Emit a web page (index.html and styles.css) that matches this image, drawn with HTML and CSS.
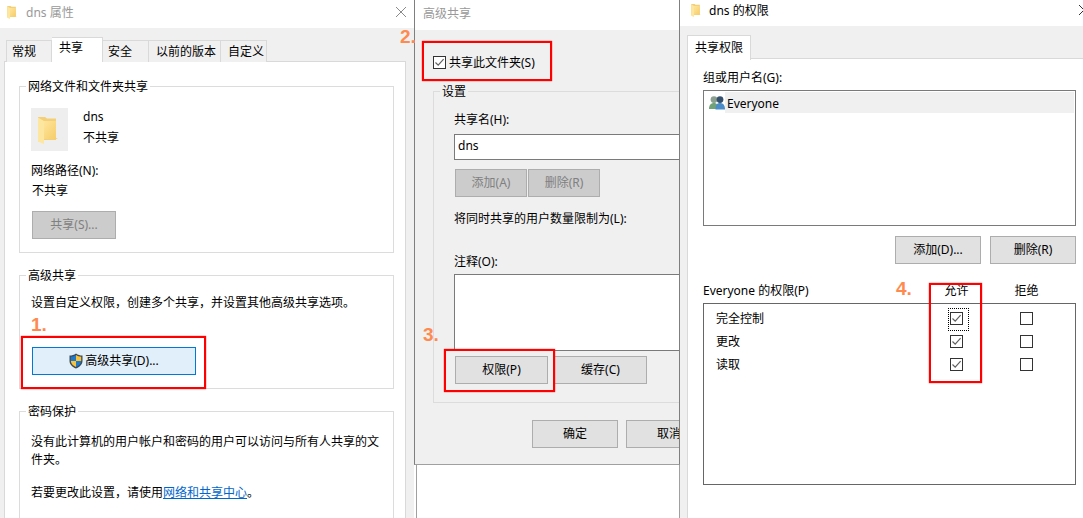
FILE: index.html
```html
<!DOCTYPE html>
<html lang="zh">
<head>
<meta charset="utf-8">
<title>dns 共享权限</title>
<link rel="stylesheet" href="styles.css">
</head>
<body>
<svg class="defs" width="0" height="0">
  <defs>
    <linearGradient id="fold" x1="0" y1="0" x2="1" y2="1">
      <stop offset="0" stop-color="#ffe59b"/>
      <stop offset="1" stop-color="#f5cb66"/>
    </linearGradient>
    <symbol id="folder" viewBox="0 0 20 27">
      <path d="M0 0h7l2 1.5h9V23H0z" fill="#f3cf77"/>
      <path d="M6 4 H18 V21 L20 22 H6z" fill="url(#fold)"/>
      <path d="M0 0.5 L6 4 V27 L1 25 H0z" fill="#fde6a0"/>
    </symbol>
    <symbol id="check" viewBox="0 0 13 13">
      <path d="M2.5 6.5 L5.2 9.2 L10.6 3.2" fill="none" stroke="#606060" stroke-width="1.2"/>
    </symbol>
  </defs>
</svg>

<section class="win win-back">
  <header class="title title-back">
    <svg class="fold-small"><use href="#folder"/></svg>
    <span class="title-text muted">dns 属性</span>
    <svg class="close" viewBox="0 0 10 10"><path d="M0 0 L10 10 M10 0 L0 10" stroke="#8a8a8a" fill="none"/></svg>
  </header>
  <nav class="tabs">
    <span class="tab tab-general">常规</span>
    <span class="tab tab-share active">共享</span>
    <span class="tab tab-security">安全</span>
    <span class="tab tab-prev">以前的版本</span>
    <span class="tab tab-custom">自定义</span>
  </nav>
  <div class="panel">
    <div class="group group-net">
      <div class="legend">网络文件和文件夹共享</div>
      <div class="info">
        <div class="folder-box"><svg class="fold-big"><use href="#folder"/></svg></div>
        <div class="info-text">
          <div>dns</div>
          <div class="info-state">不共享</div>
        </div>
      </div>
      <div class="path-label">网络路径(N):</div>
      <div class="path-value">不共享</div>
      <button class="btn btn-off btn-share">共享(S)...</button>
    </div>
    <div class="group group-adv">
      <div class="legend">高级共享</div>
      <p class="adv-text">设置自定义权限，创建多个共享，并设置其他高级共享选项。</p>
      <button class="btn btn-focus">
        <svg class="shield" viewBox="0 0 14 16">
          <path d="M7 0.5 C5 2 3 2.5 0.5 2.5 V8 C0.5 11.5 3.5 14 7 15.5 C10.5 14 13.5 11.5 13.5 8 V2.5 C11 2.5 9 2 7 0.5z" fill="#3c4a56"/>
          <path d="M7 2 V8 H1.8 V3.7 C3.8 3.6 5.4 3.1 7 2z" fill="#1f79c9"/>
          <path d="M7 2 C8.6 3.1 10.2 3.6 12.2 3.7 V8 H7z" fill="#f7c23c"/>
          <path d="M1.8 8 H7 V14 C4.4 12.8 2 11 1.8 8z" fill="#f7c23c"/>
          <path d="M7 8 H12.2 C12 11 9.6 12.8 7 14z" fill="#1f79c9"/>
        </svg>
        <span>高级共享(D)...</span>
      </button>
    </div>
    <div class="group group-pass">
      <div class="legend">密码保护</div>
      <p class="pass-text">没有此计算机的用户帐户和密码的用户可以访问与所有人共享的文件夹。</p>
      <p class="pass-link">若要更改此设置，请使用<a class="link">网络和共享中心</a>。</p>
    </div>
  </div>
</section>

<div class="under"></div>

<section class="win win-adv">
  <header class="title title-adv">
    <span class="title-text muted">高级共享</span>
  </header>
  <div class="check-row">
    <span class="cb on"><svg><use href="#check"/></svg></span>
    <span class="check-label">共享此文件夹(S)</span>
  </div>
  <div class="group group-set">
    <div class="legend">设置</div>
    <div class="set-name">共享名(H):</div>
    <div class="field">dns</div>
    <div class="row-off">
      <button class="btn btn-off btn-s">添加(A)</button>
      <button class="btn btn-off btn-s">删除(R)</button>
    </div>
    <div class="set-limit">将同时共享的用户数量限制为(L):</div>
    <div class="set-note">注释(O):</div>
    <div class="area"></div>
    <div class="row-perm">
      <button class="btn btn-m">权限(P)</button>
      <button class="btn btn-m">缓存(C)</button>
    </div>
  </div>
  <div class="row-ok">
    <button class="btn btn-l">确定</button>
    <button class="btn btn-l">取消</button>
  </div>
</section>

<section class="win win-perm">
  <header class="title title-perm">
    <svg class="fold-small"><use href="#folder"/></svg>
    <span class="title-text">dns 的权限</span>
    <svg class="close close-cut" viewBox="0 0 10 10"><path d="M0 0 L10 10 M10 0 L0 10" stroke="#333" fill="none"/></svg>
  </header>
  <nav class="tabs tabs-perm">
    <span class="tab active tab-only">共享权限</span>
  </nav>
  <div class="panel panel-perm">
    <div class="users-label">组或用户名(G):</div>
    <div class="list">
      <div class="list-row">
        <svg class="users" viewBox="0 0 16 14">
          <circle cx="5" cy="3.6" r="3.4" fill="#8b9f90"/>
          <path d="M0 13 C0 9 2 7 5 7 C8 7 9 9 9 13z" fill="#6fa276"/>
          <circle cx="11" cy="3.6" r="3.4" fill="#34506c"/>
          <path d="M6.5 13.5 C6.5 9 8 7 11 7 C14 7 16 9 16 13.5z" fill="#4a8cc8"/>
        </svg>
        <span class="list-name">Everyone</span>
      </div>
    </div>
    <div class="row-users">
      <button class="btn btn-l">添加(D)...</button>
      <button class="btn btn-l">删除(R)</button>
    </div>
    <div class="perm-grid perm-head">
      <span>Everyone 的权限(P)</span>
      <span class="center">允许</span>
      <span class="center">拒绝</span>
    </div>
    <div class="perm-box">
      <div class="perm-grid perm-row">
        <span class="perm-name">完全控制</span>
        <span class="center"><span class="cb on focus"><svg><use href="#check"/></svg></span></span>
        <span class="center"><span class="cb"></span></span>
      </div>
      <div class="perm-grid perm-row">
        <span class="perm-name">更改</span>
        <span class="center"><span class="cb on"><svg><use href="#check"/></svg></span></span>
        <span class="center"><span class="cb"></span></span>
      </div>
      <div class="perm-grid perm-row">
        <span class="perm-name">读取</span>
        <span class="center"><span class="cb on"><svg><use href="#check"/></svg></span></span>
        <span class="center"><span class="cb"></span></span>
      </div>
    </div>
  </div>
</section>

<span class="step step-1">1.</span>
<span class="step step-2">2.</span>
<span class="step step-3">3.</span>
<span class="step step-4">4.</span>
<div class="mark mark-1"></div>
<div class="mark mark-2"></div>
<div class="mark mark-3"></div>
<div class="mark mark-4"></div>
</body>
</html>
```

FILE: styles.css
```css
* { box-sizing: border-box; }
html, body { margin: 0; padding: 0; }
body {
  position: relative;
  width: 1083px;
  height: 518px;
  overflow: hidden;
  background: #fff;
  font: 12px/16px "Noto Sans", "Noto Sans CJK SC", sans-serif;
  color: #000;
}
p { margin: 0; }
.defs { position: absolute; }

/* windows on the desktop */
.win {
  position: absolute;
  top: 0;
  overflow: hidden;
  background: #f0f0f0;
}
.win-back { left: 0; width: 414px; height: 518px; }
.win-adv {
  left: 414px;
  width: 266px;
  height: 465px;
  border: 1px solid #7f7f7f;
  border-top: 0;
  border-bottom-color: #a0a0a0;
}
.win-perm { left: 680px; width: 403px; height: 518px; }
.under {
  position: absolute;
  left: 416px;
  top: 464px;
  width: 264px;
  height: 54px;
  background: #fff;
  border-left: 1px solid #a0a0a0;
  border-right: 1px solid #a0a0a0;
}

/* title bars */
.title { display: flex; align-items: flex-start; background: #fff; }
.title-back { height: 28px; padding: 5px 8px 0 7px; }
.title-adv { height: 30px; padding: 6px 0 0 8px; }
.title-perm { height: 26px; padding: 3px 0 0 11px; }
.title-text { white-space: nowrap; }
.muted { color: #999; }
.fold-small { width: 10px; height: 13px; margin: 1px 9px 0 0; flex: none; }
.title-perm .fold-small { margin: 1px 8px 0 0; }
.close { width: 10px; height: 10px; margin: 2px 0 0 auto; flex: none; }
.close-cut { margin: 2px -6px 0 auto; }

/* tabs */
.tabs {
  display: flex;
  align-items: flex-end;
  height: 25px;
  margin-top: 9px;
  padding-left: 6px;
  position: relative;
  z-index: 1;
  margin-bottom: -1px;
}
.tab {
  height: 22px;
  border: 1px solid #d9d9d9;
  border-bottom: 0;
  border-left: 0;
  padding: 3px 0 0 5px;
  background: #f0f0f0;
  white-space: nowrap;
}
.tab.active {
  height: 25px;
  background: #fff;
  border-left: 0;
  padding: 2px 0 0 7px;
}
.tab-general { width: 46px; border-left: 1px solid #d9d9d9; }
.tab-share { width: 51px; }
.tab-security { width: 46px; }
.tab-prev { width: 72px; padding-left: 7px; }
.tab-custom { width: 46px; padding-left: 7px; }
.tabs-perm { padding-left: 7px; margin-bottom: -2px; }
.tab.tab-only { width: 64px; border-left: 1px solid #d9d9d9; padding-left: 7px; padding-top: 4px; }

/* panels */
.panel {
  width: 402px;
  height: 470px;
  margin-left: 4px;
  padding-left: 14px;
  background: #fff;
  border: 1px solid #d9d9d9;
}
.panel-perm {
  width: 396px;
  height: 460px;
  margin-left: 7px;
  padding-left: 15px;
  border-right: 0;
  border-bottom: 0;
}

/* group boxes */
.group {
  width: 375px;
  border: 1px solid #dcdcdc;
  background: #fff;
}
.legend {
  width: fit-content;
  margin: -9px 0 -1px 6px;
  padding: 1px 2px 0;
  background: #fff;
  white-space: nowrap;
}
.group-net { height: 167px; margin-top: 24px; }
.group-adv { height: 114px; margin-top: 22px; }
.group-pass { height: 140px; margin-top: 22px; }
.group-set {
  width: 400px;
  height: 312px;
  margin: 21px 0 0 18px;
  background: #f0f0f0;
}
.group-set .legend { background: #f0f0f0; }

/* first window */
.info { display: flex; gap: 15px; margin: 14px 0 0 11px; }
.folder-box {
  width: 37px;
  height: 43px;
  padding: 9px 0 0 7px;
  background: #eee;
}
.fold-big { display: block; width: 20px; height: 27px; }
.info-text { padding-top: 1px; }
.info-state { margin-top: 5px; }
.path-label { margin: 12px 0 0 11px; }
.path-value { margin: 4px 0 0 12px; }
.adv-text { margin: 12px 0 0 11px; white-space: nowrap; }
.pass-text { width: 355px; margin: 14px 0 0 11px; line-height: 18px; }
.pass-link { margin: 16px 0 0 11px; white-space: nowrap; }
.link { color: #0066cc; text-decoration: underline; }

/* buttons */
.btn {
  display: flex;
  align-items: center;
  justify-content: center;
  height: 28px;
  padding: 0;
  background: #e1e1e1;
  border: 1px solid #adadad;
  border-radius: 0;
  font: inherit;
  color: #000;
  white-space: nowrap;
  flex: none;
}
.btn-off { background: #cccccc; color: #808080; }
.btn-share { width: 84px; margin: 12px 0 0 12px; }
.btn-focus {
  width: 164px;
  margin: 36px 0 0 12px;
  background: #e1effa;
  border-color: #0078d7;
  gap: 2px;
}
.shield { width: 14px; height: 16px; }
.btn-s { width: 72px; }
.btn-m { width: 93px; }
.btn-l { width: 86px; }

/* second window */
.check-row {
  display: flex;
  align-items: center;
  gap: 3px;
  height: 16px;
  margin: 24px 0 0 18px;
  white-space: nowrap;
}
.check-label { padding-top: 2px; }
.cb {
  position: relative;
  display: block;
  width: 13px;
  height: 13px;
  background: #fff;
  border: 1px solid #333;
  flex: none;
}
.cb svg { position: absolute; left: -1px; top: -1px; width: 13px; height: 13px; }
.set-name { margin: 13px 0 0 20px; }
.field {
  width: 300px;
  height: 26px;
  margin: 6px 0 0 20px;
  padding: 3px 0 0 3px;
  background: #fff;
  border: 1px solid #7a7a7a;
}
.row-off { display: flex; gap: 1px; margin: 9px 0 0 21px; }
.set-limit { margin: 14px 0 0 20px; white-space: nowrap; }
.set-note { margin: 27px 0 0 20px; }
.area {
  width: 300px;
  height: 77px;
  margin: 4px 0 0 20px;
  background: #fff;
  border: 1px solid #7a7a7a;
}
.row-perm { display: flex; gap: 6px; margin: 5px 0 0 21px; }
.row-ok { display: flex; gap: 8px; margin: 17px 0 0 117px; }

/* third window */
.users-label { margin-top: 11px; }
.list {
  width: 373px;
  height: 136px;
  margin-top: 4px;
  padding: 1px 1px 0 0;
  background: #fff;
  border: 1px solid #7a7a7a;
}
.list-row { display: flex; align-items: center; height: 21px; padding-left: 5px; }
.users { width: 16px; height: 14px; flex: none; }
.list-name {
  flex: 1;
  height: 21px;
  padding: 4px 0 0 2px;
  background: #f0f0f0;
}
.row-users {
  display: flex;
  justify-content: flex-end;
  gap: 9px;
  width: 373px;
  margin-top: 10px;
}
.perm-grid {
  display: grid;
  grid-template-columns: 218px 71px 69px;
}
.center { display: flex; justify-content: center; }
.perm-head { margin-top: 19px; white-space: nowrap; }
.perm-box {
  width: 373px;
  height: 182px;
  margin-top: 4px;
  padding-top: 4px;
  border: 1px solid #666;
  background: #fff;
}
.perm-box .perm-grid { grid-template-columns: 217px 71px 69px; }
.perm-row { height: 23px; padding-top: 3px; }
.perm-row .cb { margin-top: 1px; }
.perm-name { padding-left: 12px; }
.focus::after {
  content: "";
  position: absolute;
  left: -3px;
  top: -5px;
  width: 19px;
  height: 21px;
  border: 1px dotted #000;
}

/* annotations lying over the windows */
.step {
  position: absolute;
  font: bold 19px/20px "Liberation Sans", sans-serif;
  color: #ff8a50;
}
.step-1 { left: 31px; top: 315px; }
.step-2 { left: 400px; top: 27px; }
.step-3 { left: 423px; top: 325px; }
.step-4 { left: 896px; top: 279px; }
.mark {
  position: absolute;
  border: 2px solid #f00;
  box-shadow: 0 0 1px #f00;
}
.mark-1 { left: 21px; top: 336px; width: 185px; height: 53px; }
.mark-2 { left: 422px; top: 41px; width: 130px; height: 40px; }
.mark-3 { left: 444px; top: 349px; width: 111px; height: 43px; }
.mark-4 { left: 929px; top: 283px; width: 53px; height: 100px; }
```
